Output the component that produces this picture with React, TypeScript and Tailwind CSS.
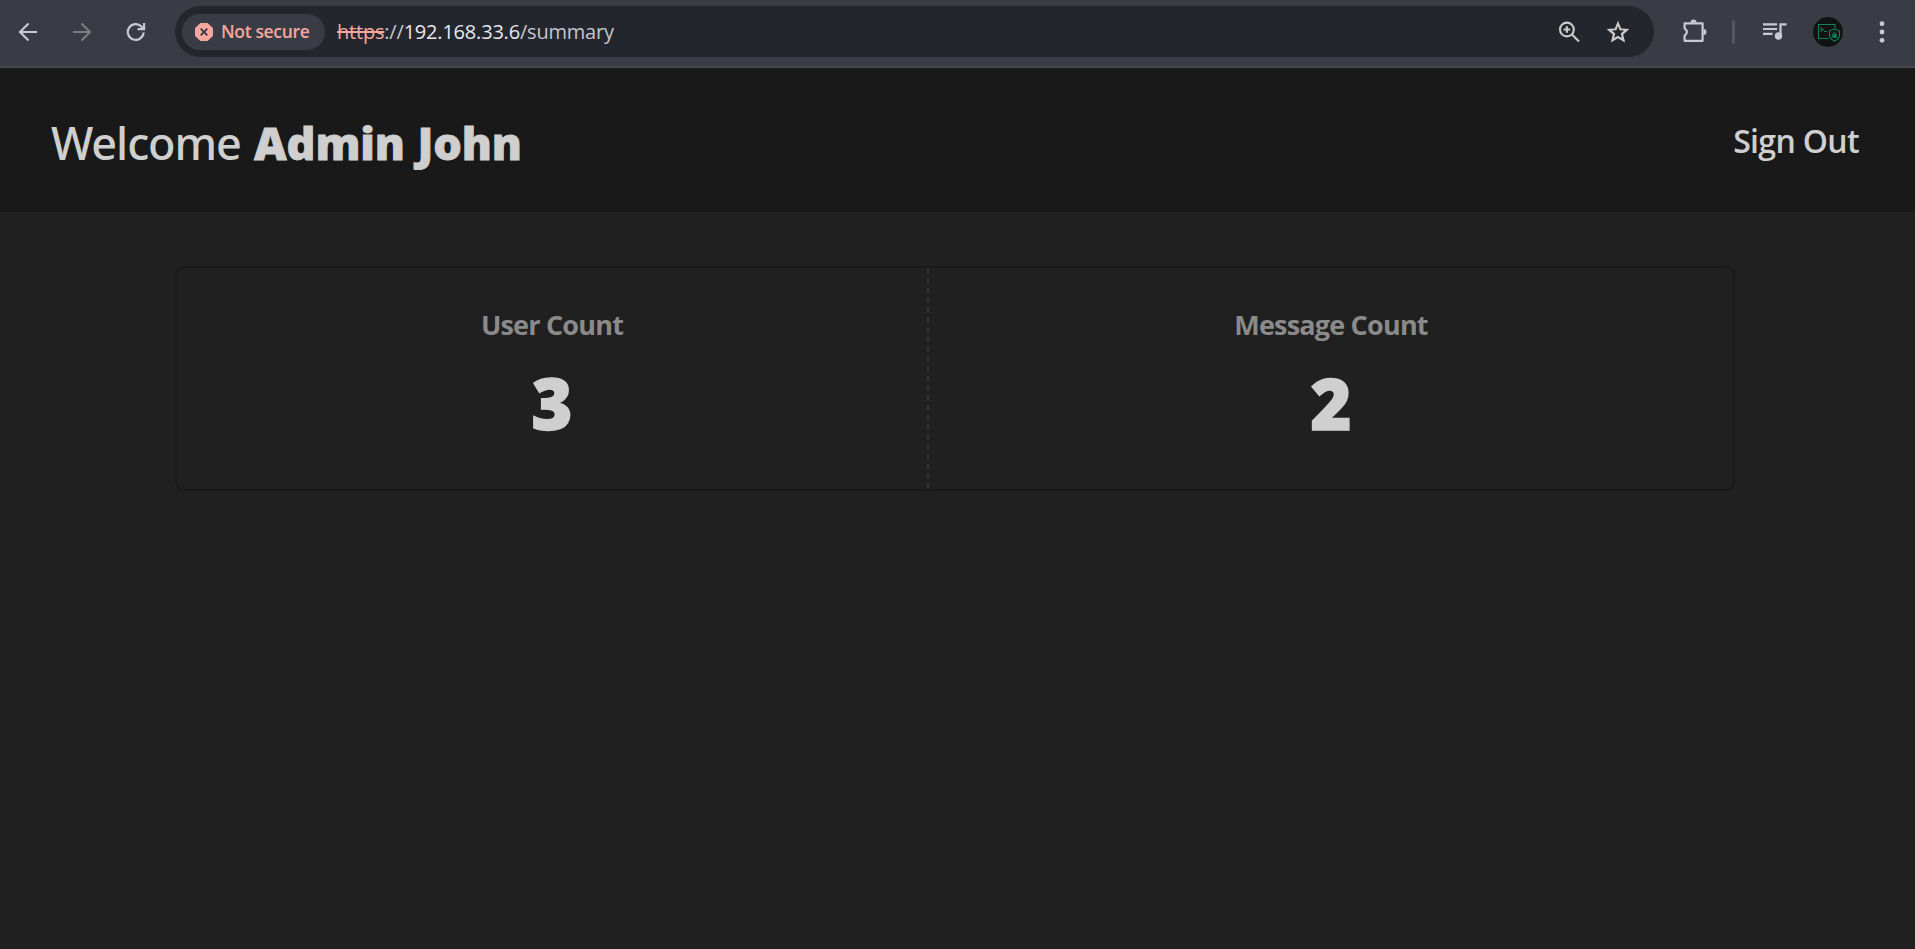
import React from "react";

const strokeIcon = { fill: "none", stroke: "currentColor" };

function Toolbar() {
  return (
    <div className="flex h-[68px] shrink-0 items-center border-b-2 border-[#46474c] bg-[#3a3c45] pb-0.5 text-[#c7cad6]">
      <svg className="ml-[18px] h-5 w-5" viewBox="0 0 20 20" strokeWidth="2.1" {...strokeIcon}>
        <path d="M19 10H3M10.500 1.500 2 10l8.500 8.500" />
      </svg>
      <svg className="ml-[34px] h-5 w-5 text-[#7b7d85]" viewBox="0 0 20 20" strokeWidth="2.1" {...strokeIcon}>
        <path d="M1 10h16M9.500 1.500 18 10l-8.500 8.500" />
      </svg>
      <svg className="ml-[34px] h-5 w-5" viewBox="0 0 20 20" strokeWidth="2.2" {...strokeIcon}>
        <path d="M17.600 10.500a7.900 7.900 0 1 1-2.200-6l2 2.200M11.500 7.200h6.600V.9" />
      </svg>
      <div className="-mt-px ml-[29px] flex h-[51px] w-[1479px] items-center rounded-full bg-[#24262e] pl-[7px]">
        <div className="flex h-9 w-[143px] items-center rounded-full bg-[#3a3c45] pl-[13px] text-[#f6a79e]">
          <svg className="h-[18px] w-[18px]" viewBox="0 0 18 18">
            <path d="M5.300 0h7.400L18 5.300v7.400L12.700 18H5.300L0 12.700V5.300z" fill="currentColor" />
            <path d="m5.700 5.700 6.600 6.600m0-6.600-6.600 6.600" stroke="#3a3c45" strokeWidth="1.900" />
          </svg>
          <span className="ml-2 text-[17.5px] font-semibold tracking-[-0.35px] whitespace-nowrap">Not secure</span>
        </div>
        <div className="ml-3 text-[20px] tracking-[-0.2px] whitespace-nowrap text-[#c5c7cc]">
          <span className="text-[#f6a79e] line-through">https</span>://<span className="text-[#e8e9ee]">192.168.33.6</span>/summary
        </div>
        <div className="ml-auto flex items-center text-[#cfcbca]">
          <svg className="h-[22px] w-[22px]" viewBox="0 0 22 22" strokeWidth="2.1" {...strokeIcon}>
            <circle cx="8.900" cy="8.500" r="6.900" />
            <path d="m13.700 13.300 7.300 7.300M5.600 8.500h6.600M8.900 5.200v6.600" />
          </svg>
          <svg className="mr-6 ml-[26px] h-6 w-6" viewBox="0 0 24 24" fill="currentColor">
            <path
              fillRule="evenodd"
              d="m12 .8 3.200 7.600 8.200.7-6.200 5.400 1.900 8.100L12 18.300l-7.100 4.300 1.900-8.100L.6 9.100l8.200-.7zM12 6l-1.700 4.200-4.500.4 3.400 3-1 4.400 3.800-2.300 3.800 2.300-1-4.400 3.400-3-4.500-.4z"
            />
          </svg>
        </div>
      </div>
      <svg className="ml-[28px] h-[26px] w-[26px]" viewBox="0 0 26 26" strokeWidth="2.200" {...strokeIcon}>
        <path d="M2.600 4.300h18v17.500h-18v-5.200q4.600-3.600 0-7.200z" strokeLinejoin="round" />
        <path d="M8.500 3.500a3 3 0 0 1 6 0zM21.500 10a3 3 0 0 1 0 6z" fill="currentColor" stroke="none" />
      </svg>
      <div className="ml-6 h-6 w-[3px] rounded-full bg-[#54565f]" />
      <svg className="ml-[28px] h-5 w-6" viewBox="0 0 24 20" strokeWidth="2.200" {...strokeIcon}>
        <path d="M0 2.300h14M0 7h14M0 11.800h9.500M17.500 14V2.300h6" />
        <circle cx="15.500" cy="14" r="3.700" fill="currentColor" stroke="none" />
      </svg>
      <svg className="ml-[26px] h-[30px] w-[30px]" viewBox="0 0 30 30" fill="none" stroke="#12805c">
        <circle cx="15" cy="15" r="15" fill="#111313" stroke="none" />
        <path d="M15.500 21.500H5.500v-14H22V11M7.500 10.500l2.500 2-2.500 2M11 14.500h3" strokeWidth="1.100" />
        <path d="m21.500 12 5 1.800v4q0 4-5 6.500-5-2.500-5-6.500v-4z" strokeWidth="1.200" />
        <path d="M19.300 17.200h4.400v3.600h-4.400z" fill="#12805c" stroke="none" />
        <path d="M20.200 17.500v-1.500q1.300-1.700 2.600 0v1.500" />
      </svg>
      <svg className="ml-[27px] h-6 w-6" viewBox="0 0 24 24" fill="currentColor">
        <circle cx="12" cy="3.700" r="2.400" />
        <circle cx="12" cy="12" r="2.400" />
        <circle cx="12" cy="20.300" r="2.400" />
      </svg>
    </div>
  );
}

function Stat({ label, value }: { label: string; value: number }) {
  return (
    <div className="flex flex-col items-center pt-[37px] text-center">
      <div className="text-[27px] leading-[40px] font-bold tracking-[-0.8px] text-[#8a8a8a]">{label}</div>
      <div className="mt-[18px] text-[70px] leading-[80px] font-black text-[#cfcfcf] [-webkit-text-stroke:1.5px_#cfcfcf]">
        {value}
      </div>
    </div>
  );
}

export default function App() {
  return (
    <div className="flex h-[949px] w-[1915px] flex-col overflow-hidden bg-[#202020] font-['Open_Sans','Noto_Sans',sans-serif]">
      <Toolbar />
      <header className="flex h-[144px] shrink-0 items-center justify-between bg-[#191919] pr-[56px] pl-[51px] text-[#cfcfcf]">
        <h1 className="pt-1.5 text-[45px] tracking-[-0.5px] whitespace-nowrap">
          <span className="font-['Noto_Sans','Open_Sans',sans-serif] font-medium tracking-[-1.1px]">Welcome</span>{" "}
          <b className="ml-[2px] font-black tracking-[-0.1px] [-webkit-text-stroke:0.8px_#cfcfcf] [word-spacing:1px]">Admin John</b>
        </h1>
        <a className="pt-px text-[32px] font-semibold tracking-[-0.65px] whitespace-nowrap">Sign Out</a>
      </header>
      <main className="mt-[54px] ml-[175px] grid h-[225px] w-[1560px] grid-cols-[750px_1fr] rounded-[9px] border-2 border-[#191919]">
        <Stat label="User Count" value={3} />
        <div className="border-l-2 border-dashed border-[#333333]">
          <Stat label="Message Count" value={2} />
        </div>
      </main>
    </div>
  );
}
